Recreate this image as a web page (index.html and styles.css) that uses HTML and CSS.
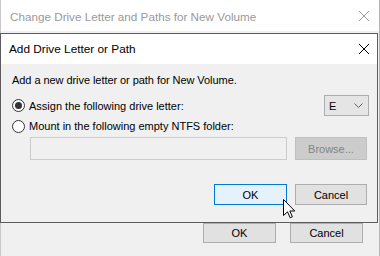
FILE: index.html
```html
<!DOCTYPE html>
<html>
<head>
<meta charset="utf-8">
<link rel="stylesheet" href="styles.css">
</head>
<body>
<div class="outer">
  <div class="outer-title">
    <span class="outer-title-text">Change Drive Letter and Paths for New Volume</span>
    <svg class="close" width="10" height="10" viewBox="0 0 10 10"><path d="M0 0L10 10M10 0L0 10" stroke="#9a9a9a" stroke-width="1"/></svg>
  </div>
  <div class="outer-body">
    <div class="outer-buttons">
      <div class="btn btn-outer">OK</div>
      <div class="btn btn-outer">Cancel</div>
    </div>
  </div>
</div>

<div class="dialog">
  <div class="dlg-title">
    <span class="dlg-title-text">Add Drive Letter or Path</span>
    <svg class="close" width="10" height="10" viewBox="0 0 10 10"><path d="M0 0L10 10M10 0L0 10" stroke="#000" stroke-width="1"/></svg>
  </div>
  <div class="dlg-body">
    <p class="intro">Add a new drive letter or path for New Volume.</p>
    <div class="row row1">
      <span class="radio checked"></span>
      <span class="label">Assign the following drive letter:</span>
      <div class="combo">
        <span class="combo-val">E</span>
        <svg width="9" height="5" viewBox="0 0 9 5"><path d="M0.5 0.5L4.5 4.5L8.5 0.5" fill="none" stroke="#606060" stroke-width="1"/></svg>
      </div>
    </div>
    <div class="row row2">
      <span class="radio"></span>
      <span class="label">Mount in the following empty NTFS folder:</span>
    </div>
    <div class="row row3">
      <div class="path-input"></div>
      <div class="btn btn-disabled">Browse...</div>
    </div>
    <div class="row row4">
      <div class="btn btn-default">OK</div>
      <div class="btn">Cancel</div>
    </div>
  </div>
</div>

<svg class="cursor" width="13" height="20" viewBox="0 0 13 20"><path d="M0.5 0.5L0.5 16.5L4.5 12.8L7.2 18.8L9.4 17.8L6.8 12L11.8 12Z" fill="#fff" stroke="#000" stroke-width="1" stroke-linejoin="miter"/></svg>
</body>
</html>
```

FILE: styles.css
```css
html, body {
  margin: 0;
  padding: 0;
}
body {
  width: 380px;
  height: 256px;
  overflow: hidden;
  position: relative;
  background: #f0f0f0;
  font-family: "Liberation Sans", Arial, sans-serif;
  font-size: 11px;
  color: #000;
}
.outer {
  width: 380px;
  height: 256px;
  box-sizing: border-box;
  border-left: 1px solid #c8c8c8;
  border-right: 1px solid #b4b4b4;
  display: flex;
  flex-direction: column;
}
.outer-title {
  height: 31px;
  flex: none;
  background: #fff;
  display: flex;
  align-items: center;
  padding: 0 10px 0 9px;
}
.outer-title-text {
  flex: 1;
  font-size: 11.7px;
  color: #999;
  padding-top: 1px;
}
.close {
  flex: none;
  display: block;
}
.outer-title .close {
  margin-top: 1px;
}
.outer-body {
  flex: 1;
  background: #f0f0f0;
  display: flex;
  flex-direction: column;
}
.outer-buttons {
  margin-top: 192px;
  display: flex;
  gap: 14px;
  padding-left: 202px;
}
.btn {
  box-sizing: border-box;
  height: 21px;
  width: 73px;
  border: 1px solid #adadad;
  background: #e1e1e1;
  display: flex;
  align-items: center;
  justify-content: center;
  font-size: 11px;
  color: #000;
}
.btn-outer {
  height: 20px;
}
.dialog {
  position: absolute;
  left: 0;
  top: 33px;
  width: 378px;
  height: 190px;
  box-sizing: border-box;
  border: 1px solid #5c5c5c;
  background: #f0f0f0;
  display: flex;
  flex-direction: column;
}
.dlg-title {
  height: 30px;
  flex: none;
  background: #fff;
  display: flex;
  align-items: center;
  padding: 0 8px 0 8px;
}
.dlg-title-text {
  flex: 1;
  font-size: 11.8px;
  color: #000;
}
.dlg-body {
  flex: 1;
  padding: 10px 8px 0 11px;
  display: flex;
  flex-direction: column;
}
.intro {
  margin: 0;
  line-height: 13px;
  height: 13px;
  letter-spacing: -0.06px;
}
.row {
  display: flex;
  align-items: center;
}
.row1 {
  margin-top: 8px;
  height: 21px;
}
.radio {
  flex: none;
  width: 13px;
  height: 13px;
  box-sizing: border-box;
  border: 1px solid #333;
  border-radius: 50%;
  background: #fff;
  display: flex;
  align-items: center;
  justify-content: center;
}
.radio.checked::after {
  content: "";
  width: 7px;
  height: 7px;
  border-radius: 50%;
  background: #333;
}
.label {
  margin-left: 4px;
  flex: 1;
}
.combo {
  flex: none;
  width: 45px;
  height: 21px;
  box-sizing: border-box;
  border: 1px solid #adadad;
  background: #e5e5e5;
  display: flex;
  align-items: center;
  justify-content: space-between;
  padding: 0 5px 0 4px;
}
.combo svg {
  display: block;
}
.row2 {
  margin-top: 3px;
  height: 14px;
}
.row3 {
  margin-top: 4px;
  height: 23px;
  padding-left: 18px;
  gap: 8px;
}
.path-input {
  width: 257px;
  height: 23px;
  box-sizing: border-box;
  border: 1px solid #cccccc;
  background: #f0f0f0;
}
.btn-disabled {
  width: 72px;
  height: 23px;
  background: #cccccc;
  border-color: #bfbfbf;
  color: #838383;
}
.row4 {
  margin-top: 24px;
  padding-left: 202px;
  gap: 8px;
}
.row4 .btn {
  width: 73px;
}
.row4 .btn + .btn {
  width: 72px;
}
.btn-default {
  border-color: #0078d7;
  background: #e5f1fb;
}
.cursor {
  position: absolute;
  left: 283px;
  top: 199px;
  display: block;
}
```
